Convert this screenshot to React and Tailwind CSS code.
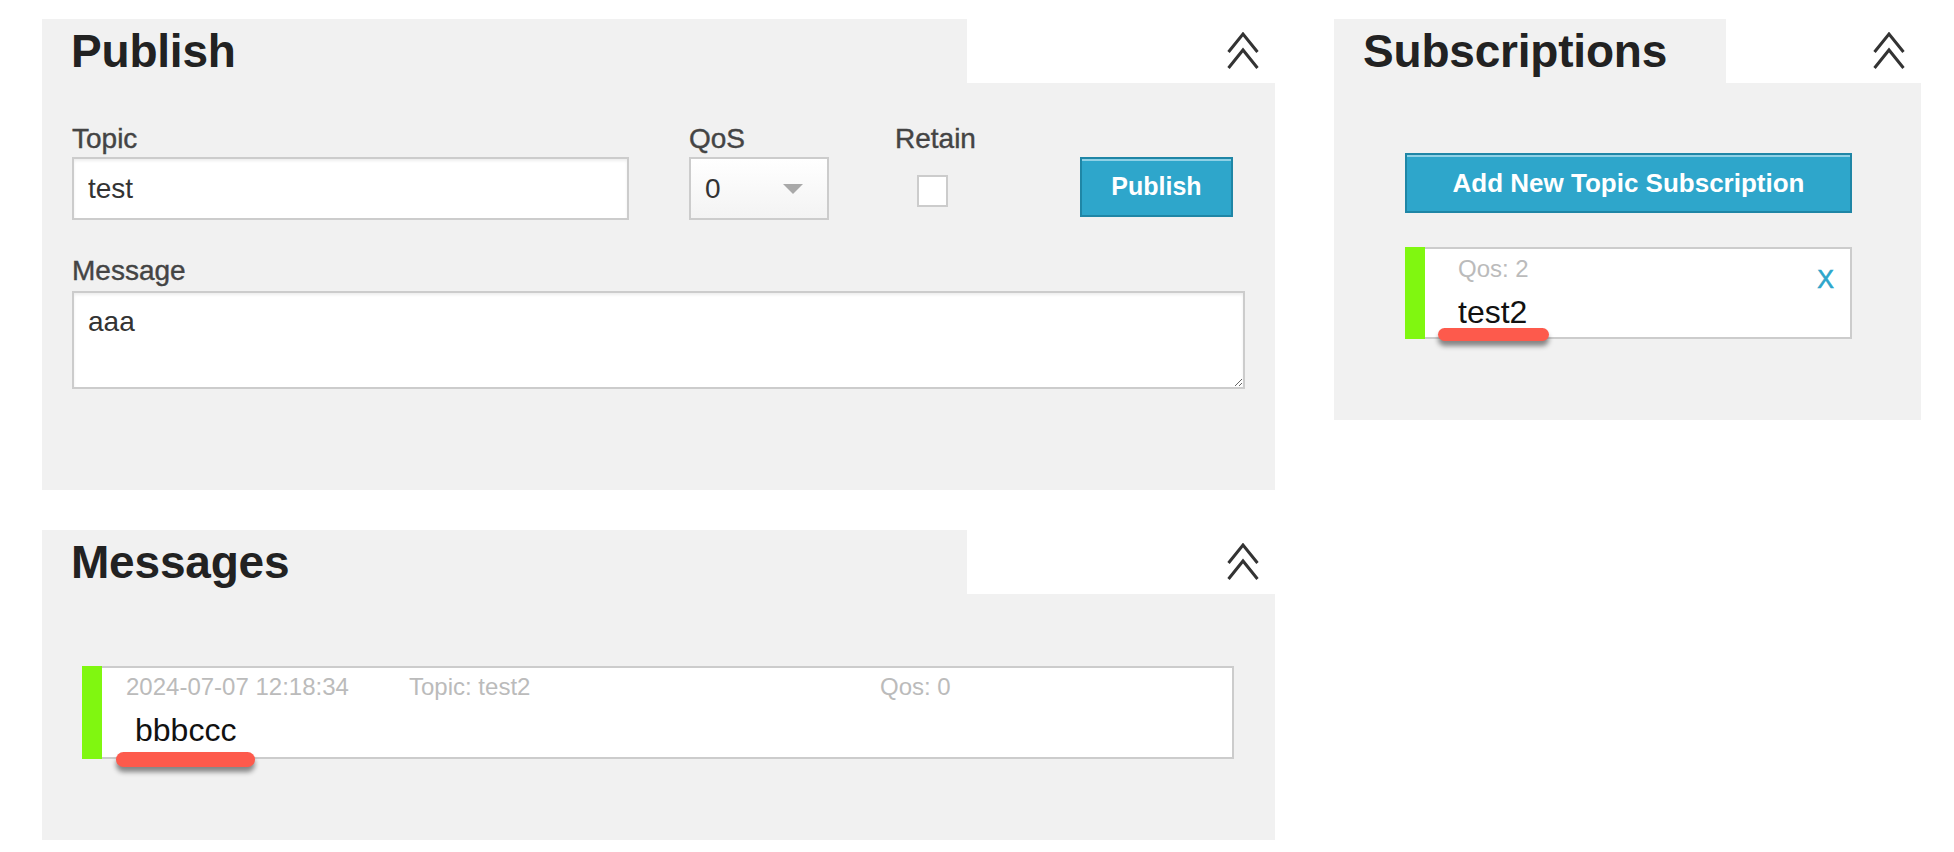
import React from 'react';

// flecha doble para plegar el panel
function Chevrons() {
  return (
    <svg width="32" height="37" viewBox="0 0 32 37" fill="none" stroke="#333" strokeWidth="3">
      <path d="M1.5 20 L16 2 L30.5 20" />
      <path d="M1.5 36 L16 18 L30.5 36" />
    </svg>
  );
}

function Panel({ title, tabWidth, children }) {
  return (
    <div className="flex flex-col">
      <div className="flex h-[64px]">
        <div className={`${tabWidth} shrink-0 bg-[#f1f1f1] pl-[29px] pt-[9px]`}>
          <h2 className="text-[46px] leading-[46px] font-bold text-[#222] tracking-[-0.2px]">{title}</h2>
        </div>
        <div className="flex-1 bg-white flex justify-end pr-[16px] pt-[13px]">
          <Chevrons />
        </div>
      </div>
      <div className="bg-[#f1f1f1]">{children}</div>
    </div>
  );
}

function Underline({ className }) {
  return (
    <div className={`absolute rounded-full bg-[#fd5a4c] shadow-[0_5px_5px_rgba(0,0,0,0.45)] ${className}`} />
  );
}

const labelCls = "text-[28px] leading-[34px] text-[#444] [-webkit-text-stroke:0.4px_#444]";

export default function App() {
  return (
    <div className="min-h-screen bg-white font-['Liberation_Sans',Arial,sans-serif] flex gap-[59px] pl-[42px] pt-[19px]">
      {/* columna izquierda */}
      <div className="w-[1233px] flex flex-col gap-[40px]">
        <Panel title="Publish" tabWidth="w-[925px]">
          <div className="px-[30px] pt-[39px] pb-[101px]">
            <div className="flex">
              <div className="w-[557px] flex flex-col">
                <label className={labelCls}>Topic</label>
                <input
                  defaultValue="test"
                  readOnly
                  className="mt-[1px] h-[63px] border-2 border-[#cccccc] bg-white pl-[14px] text-[28px] text-[#333] shadow-[inset_0_2px_3px_rgba(0,0,0,0.07)] outline-none"
                />
              </div>
              <div className="ml-[60px] w-[140px] flex flex-col">
                <label className={labelCls}>QoS</label>
                <div className="mt-[1px] h-[63px] border-2 border-[#cccccc] bg-gradient-to-b from-white to-[#f3f3f3] flex items-center justify-between pl-[14px] pr-[24px]">
                  <span className="text-[28px] text-[#333]">0</span>
                  <svg width="20" height="10" viewBox="0 0 20 10">
                    <polygon points="0,0 20,0 10,10" fill="#a9a9a9" />
                  </svg>
                </div>
              </div>
              <div className="ml-[66px] w-[81px] flex flex-col">
                <label className={labelCls}>Retain</label>
                <input
                  type="checkbox"
                  className="appearance-none mt-[19px] ml-[22px] w-[31px] h-[32px] border-2 border-[#cccccc] bg-white"
                />
              </div>
              <div className="ml-[104px] pt-[35px]">
                <button className="w-[153px] h-[60px] bg-[#2ea6cb] border-2 border-[#1f86a6] shadow-[inset_0_2px_0_#8fd1e6] text-white text-[25px] font-bold">
                  Publish
                </button>
              </div>
            </div>
            <div className="mt-[34px] flex flex-col">
              <label className={labelCls}>Message</label>
              <textarea
                defaultValue="aaa"
                readOnly
                className="mt-[3px] w-[1173px] h-[98px] border-2 border-[#cccccc] bg-white pl-[14px] pt-[12px] text-[28px] leading-[34px] text-[#333] shadow-[inset_0_2px_3px_rgba(0,0,0,0.07)] outline-none"
              />
            </div>
          </div>
        </Panel>

        <Panel title="Messages" tabWidth="w-[925px]">
          <div className="pl-[40px] pr-[41px] pt-[72px] pb-[81px]">
            <div className="relative flex h-[93px] bg-white border-2 border-l-0 border-[#cccccc]">
              <div className="w-[20px] -my-[2px] bg-[#80f710]" />
              <div className="flex flex-col pl-[24px] pt-[5px]">
                <div className="flex text-[24px] leading-[28px] text-[#bbbbbb]">
                  <span className="w-[283px]">2024-07-07 12:18:34</span>
                  <span className="w-[471px]">Topic: test2</span>
                  <span>Qos: 0</span>
                </div>
                <div className="mt-[12px] ml-[9px] text-[32px] leading-[34px] text-[#111]">bbbccc</div>
              </div>
              <Underline className="left-[34px] top-[84px] w-[139px] h-[15px]" />
            </div>
          </div>
        </Panel>
      </div>

      {/* columna derecha */}
      <div className="w-[587px] self-start">
        <Panel title="Subscriptions" tabWidth="w-[392px]">
          <div className="pl-[71px] pr-[69px] pt-[70px] pb-[81px]">
            <button className="w-full h-[60px] bg-[#2ea6cb] border-2 border-[#1f86a6] shadow-[inset_0_2px_0_#8fd1e6] text-white text-[26px] font-bold">
              Add New Topic Subscription
            </button>
            <div className="relative mt-[34px] flex h-[92px] bg-white border-2 border-l-0 border-[#cccccc]">
              <div className="w-[20px] -my-[2px] bg-[#80f710]" />
              <div className="flex-1 flex flex-col pl-[33px] pt-[6px]">
                <div className="text-[24px] leading-[28px] text-[#bbbbbb]">Qos: 2</div>
                <div className="mt-[12px] text-[32px] leading-[34px] text-[#111]">test2</div>
              </div>
              <div className="self-start mt-[16px] mr-[16px] text-[25px] leading-[28px] text-[#2ea6cb] [-webkit-text-stroke:0.6px_#2ea6cb]">X</div>
              <Underline className="left-[33px] top-[79px] w-[111px] h-[13px]" />
            </div>
          </div>
        </Panel>
      </div>
    </div>
  );
}
